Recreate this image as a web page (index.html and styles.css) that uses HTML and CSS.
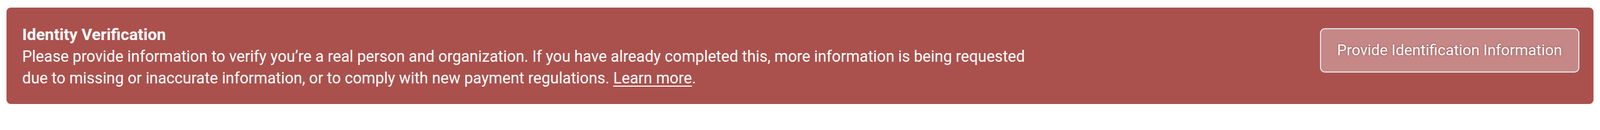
FILE: index.html
```html
<!DOCTYPE html>
<html lang="en">
<head>
<meta charset="utf-8">
<title>Identity Verification</title>
<link rel="stylesheet" href="styles.css">
</head>
<body>
<div class="banner">
  <div class="banner-text">
    <div class="banner-title">Identity Verification</div>
    <p class="banner-body">Please provide information to verify you’re a real person and organization. If you have already completed this, more information is being requested due to missing or inaccurate information, or to comply with new payment regulations. <a href="#" class="banner-link">Learn more</a>.</p>
  </div>
  <button class="banner-button" type="button">Provide Identification Information</button>
</div>
</body>
</html>
```

FILE: styles.css
```css
html, body {
  margin: 0;
  padding: 0;
  background: #ffffff;
}

body {
  padding: 14px 12px 0 12px;
  font-family: Roboto, "Liberation Sans", sans-serif;
}

.banner {
  display: flex;
  justify-content: space-between;
  align-items: flex-start;
  background: #aa514d;
  color: #ffffff;
  border-radius: 8px;
  padding: 30px 26px 28px 29px;
  height: 178px;
  box-sizing: border-box;
}

.banner-text {
  max-width: 1885px;
  line-height: 40px;
}

.banner-title {
  font-weight: 700;
  font-size: 30px;
}

.banner-body {
  margin: 0;
  font-weight: 400;
  font-size: 28.7px;
}

.banner-link {
  color: #ffffff;
  text-decoration: underline;
  text-underline-offset: 4px;
  text-decoration-thickness: 2px;
}

.banner-button {
  flex: none;
  margin-top: 8px;
  font-family: Roboto, "Liberation Sans", sans-serif;
  font-size: 28px;
  line-height: 40px;
  color: #ffffff;
  text-shadow: 0 0 3px rgba(90, 30, 30, 0.75);
  background: #c68886;
  border: 2px solid #e3e6ee;
  border-radius: 9px;
  padding: 19px 30px;
  cursor: pointer;
}
```
